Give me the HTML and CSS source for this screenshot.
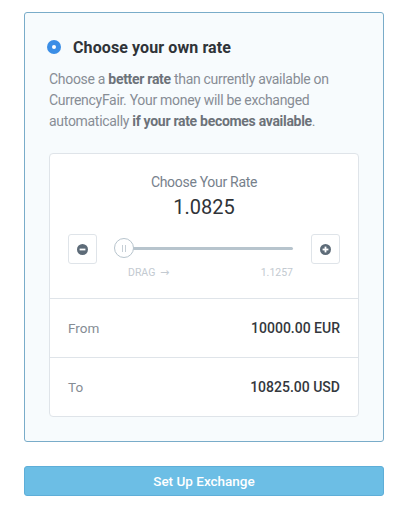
FILE: index.html
```html
<!DOCTYPE html>
<html lang="en">
<head>
  <meta charset="UTF-8" />
  <title>Choose your own rate</title>
  <meta name="viewport" content="width=device-width, initial-scale=1" />
  <link rel="stylesheet" href="styles.css">
</head>
<body>
  <div class="page">
    <div class="option-card">
      <div class="option-title">
        <span class="radio"></span>
        <h3>Choose your own rate</h3>
      </div>
      <p class="option-desc">
        Choose a <b>better rate</b> than currently available on<br>
        CurrencyFair. Your money will be exchanged<br>
        automatically <b>if your rate becomes available</b>.
      </p>

      <div class="rate-box">
        <div class="rate-top">
          <div class="rate-label">Choose Your Rate</div>
          <div class="rate-value">1.0825</div>
          <div class="rate-controls">
            <button class="step-btn" type="button" aria-label="Decrease">
              <svg width="11" height="11" viewBox="0 0 11 11"><circle cx="5.5" cy="5.5" r="5.5" fill="#5d6b78"/><rect x="2.6" y="4.6" width="5.8" height="1.8" fill="#fff"/></svg>
            </button>
            <div class="slider">
              <div class="track"></div>
              <div class="handle"><span></span><span></span></div>
              <div class="slider-labels">
                <span>DRAG <span class="arrow">&#8594;</span></span>
                <span>1.1257</span>
              </div>
            </div>
            <button class="step-btn" type="button" aria-label="Increase">
              <svg width="11" height="11" viewBox="0 0 11 11"><circle cx="5.5" cy="5.5" r="5.5" fill="#5d6b78"/><rect x="2.6" y="4.6" width="5.8" height="1.8" fill="#fff"/><rect x="4.6" y="2.6" width="1.8" height="5.8" fill="#fff"/></svg>
            </button>
          </div>
        </div>
        <div class="rate-row">
          <span class="row-label">From</span>
          <span class="row-value">10000.00 EUR</span>
        </div>
        <div class="rate-row">
          <span class="row-label">To</span>
          <span class="row-value">10825.00 USD</span>
        </div>
      </div>
    </div>

    <button class="submit-btn" type="button">Set Up Exchange</button>
  </div>
</body>
</html>
```

FILE: styles.css
```css
body {
  margin: 0;
  background: #fff;
  font-family: Roboto, "Noto Sans", sans-serif;
  color: #333;
}
.page {
  width: 360px;
  padding: 12px 0 0 24px;
}
.option-card {
  background: #f7fbfd;
  border: 1px solid #79acc9;
  border-radius: 3px;
  padding: 24px;
}
.option-title {
  display: flex;
  align-items: center;
  height: 20px;
}
.radio {
  width: 14px;
  height: 14px;
  border-radius: 50%;
  background: #3b8ee6;
  margin-left: -2px;
  margin-right: 12px;
  position: relative;
}
.radio::after {
  content: "";
  position: absolute;
  left: 5px;
  top: 5px;
  width: 4px;
  height: 4px;
  border-radius: 50%;
  background: #fff;
}
.option-title h3 {
  margin: 0;
  font-size: 16px;
  font-weight: 700;
  color: #2f3338;
  letter-spacing: 0.1px;
}
.option-desc {
  margin: 12px 0 0;
  font-size: 14px;
  line-height: 21px;
  letter-spacing: -0.3px;
  color: #878d95;
}
.option-desc b {
  font-weight: 700;
  color: #6c7279;
}
.rate-box {
  margin-top: 21px;
  background: #fff;
  border: 1px solid #dfe4e9;
  border-radius: 4px;
}
.rate-top {
  padding: 19px 0 19px;
  text-align: center;
  border-bottom: 1px solid #dfe4e9;
}
.rate-label {
  font-size: 14px;
  line-height: 18px;
  letter-spacing: -0.3px;
  color: #77818c;
}
.rate-value {
  margin-top: 4px;
  font-size: 20px;
  line-height: 24px;
  color: #2f3338;
}
.rate-controls {
  display: flex;
  align-items: flex-start;
  gap: 17px;
  padding: 15px 18px 0;
}
.step-btn {
  width: 29px;
  height: 30px;
  padding: 0;
  border: 1px solid #dfe4e9;
  border-radius: 3px;
  background: #fff;
  display: flex;
  align-items: center;
  justify-content: center;
}
.slider {
  flex: 1;
  position: relative;
  padding-top: 4px;
  margin-right: 1px;
}
.track {
  height: 3px;
  margin: 9px 0 8px 10px;
  background: #b7c4cd;
  border-radius: 2px;
}
.handle {
  position: absolute;
  left: 0;
  top: 4px;
  width: 18px;
  height: 18px;
  border: 1px solid #b7c4cd;
  border-radius: 50%;
  background: #fff;
  display: flex;
  align-items: center;
  justify-content: center;
  gap: 2px;
}
.handle span {
  width: 1px;
  height: 7px;
  background: #c6cfd6;
}
.slider-labels {
  display: flex;
  justify-content: space-between;
  padding-left: 14px;
  margin-top: 17px;
  font-size: 10.5px;
  line-height: 12px;
  color: #c3cad1;
}
.arrow {
  font-family: "DejaVu Sans", sans-serif;
  font-size: 11px;
  margin-left: 2px;
}
.rate-row {
  display: flex;
  justify-content: space-between;
  align-items: center;
  height: 58px;
  padding: 0 18px;
  font-size: 13.5px;
}
.rate-row + .rate-row {
  border-top: 1px solid #dfe4e9;
}
.row-label {
  color: #858c94;
}
.row-value {
  color: #34383d;
  font-weight: 500;
  font-size: 14px;
}
.submit-btn {
  display: block;
  width: 360px;
  height: 30px;
  margin-top: 24px;
  background: #6cbee5;
  border: 1px solid #5eaed8;
  border-radius: 3px;
  color: #fff;
  font-family: inherit;
  font-size: 13.5px;
  font-weight: 500;
}
```
